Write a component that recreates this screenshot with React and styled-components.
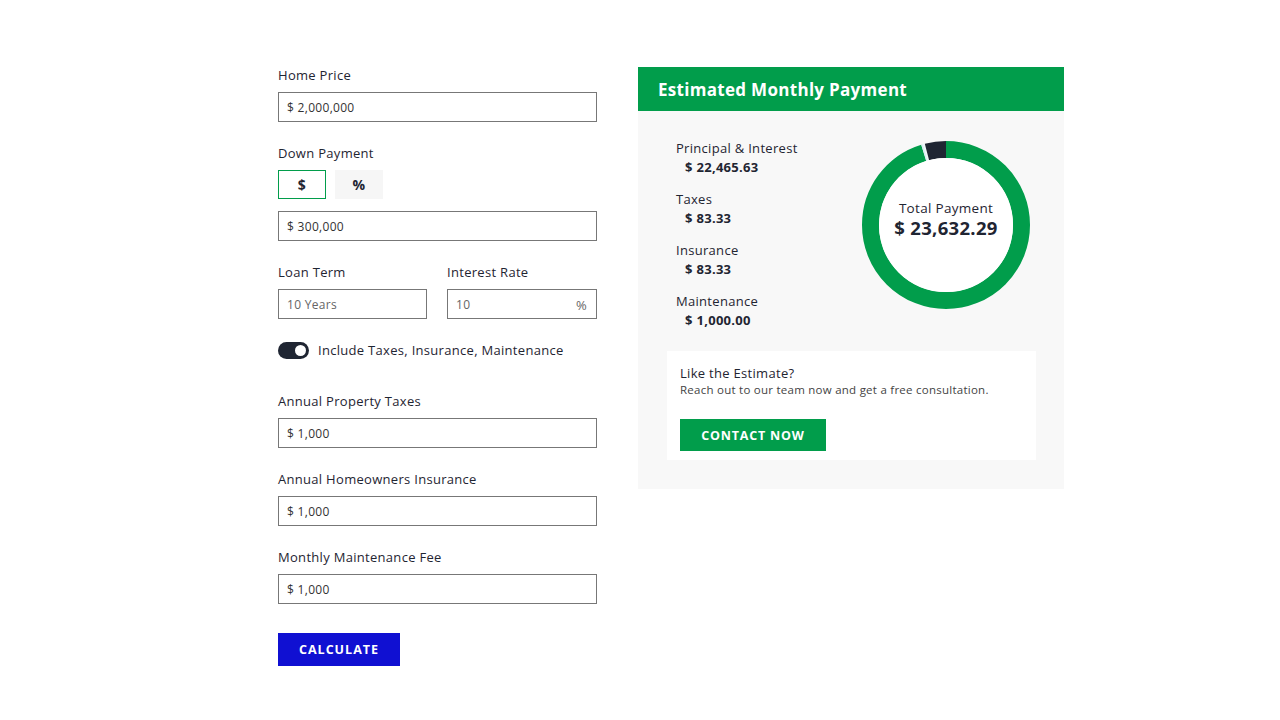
import React from 'react'
import styled, { createGlobalStyle } from 'styled-components'

const GREEN = '#019d4b'
const DARK = '#1f2532'

const GlobalStyle = createGlobalStyle`
  body {
    margin: 0;
    background: #fff;
    font-family: 'Open Sans', 'Liberation Sans', sans-serif;
    color: #1f2532;
    letter-spacing: 0.3px;
  }
`

const fields = [
  { label: 'Annual Property Taxes', value: '$ 1,000' },
  { label: 'Annual Homeowners Insurance', value: '$ 1,000' },
  { label: 'Monthly Maintenance Fee', value: '$ 1,000' }
]

const breakdown = [
  { label: 'Principal & Interest', value: '$ 22,465.63' },
  { label: 'Taxes', value: '$ 83.33' },
  { label: 'Insurance', value: '$ 83.33' },
  { label: 'Maintenance', value: '$ 1,000.00' }
]

const slices = [
  { value: 22465.63, color: GREEN },
  { value: 83.33, color: '#d8eef4' },
  { value: 83.33, color: '#eef6f8' },
  { value: 1000, color: DARK }
]

const Donut = () => {
  const r = 75.5
  const c = 2 * Math.PI * r
  const total = slices.reduce((s, x) => s + x.value, 0)
  let offset = 0
  return (
    <svg width="170" height="170" viewBox="0 0 170 170">
      <g transform="rotate(-90 85 85)">
        {slices.map((s, i) => {
          const len = (s.value / total) * c
          const el = (
            <circle
              key={i}
              cx="85"
              cy="85"
              r={r}
              fill="none"
              stroke={s.color}
              strokeWidth="17"
              strokeDasharray={`${len} ${c - len}`}
              strokeDashoffset={-offset}
            />
          )
          offset += len
          return el
        })}
      </g>
      <circle cx="85" cy="85" r="67" fill="#fff" />
    </svg>
  )
}

const App = () => {
  return (
    <>
      <GlobalStyle />
      <Page>
        <Form>
          <Field>
            <Label>Home Price</Label>
            <Input>$ 2,000,000</Input>
          </Field>
          <Field>
            <Label>Down Payment</Label>
            <ModeRow>
              <ModeButton active>$</ModeButton>
              <ModeButton>%</ModeButton>
            </ModeRow>
            <Input>$ 300,000</Input>
          </Field>
          <TwoCol>
            <Field>
              <Label>Loan Term</Label>
              <Input muted>10 Years</Input>
            </Field>
            <Field>
              <Label>Interest Rate</Label>
              <Input muted>
                <span>10</span>
                <Suffix>%</Suffix>
              </Input>
            </Field>
          </TwoCol>
          <SwitchRow>
            <Switch>
              <Knob />
            </Switch>
            <SwitchLabel>Include Taxes, Insurance, Maintenance</SwitchLabel>
          </SwitchRow>
          {fields.map(f => (
            <Field key={f.label}>
              <Label>{f.label}</Label>
              <Input>{f.value}</Input>
            </Field>
          ))}
          <CalcButton>CALCULATE</CalcButton>
        </Form>

        <Panel>
          <PanelHeader>Estimated Monthly Payment</PanelHeader>
          <PanelBody>
            <Summary>
              <List>
                {breakdown.map(b => (
                  <Item key={b.label}>
                    <ItemLabel>{b.label}</ItemLabel>
                    <ItemValue>{b.value}</ItemValue>
                  </Item>
                ))}
              </List>
              <Chart>
                <Donut />
                <ChartCenter>
                  <TotalLabel>Total Payment</TotalLabel>
                  <TotalValue>$ 23,632.29</TotalValue>
                </ChartCenter>
              </Chart>
            </Summary>
            <Cta>
              <CtaTitle>Like the Estimate?</CtaTitle>
              <CtaText>Reach out to our team now and get a free consultation.</CtaText>
              <ContactButton>CONTACT NOW</ContactButton>
            </Cta>
          </PanelBody>
        </Panel>
      </Page>
    </>
  )
}

const Page = styled.div`
  display: flex;
  align-items: flex-start;
  gap: 41px;
  padding: 67px 0 0 278px;
`

const Form = styled.div`
  width: 319px;
  display: flex;
  flex-direction: column;
  gap: 23px;
`

const Field = styled.div`
  display: flex;
  flex-direction: column;
`

const Label = styled.div`
  font-size: 13px;
  line-height: 17px;
  margin-bottom: 8px;
  color: #1f2532;
`

const Input = styled.div`
  height: 30px;
  box-sizing: border-box;
  border: 1.5px solid #777;
  display: flex;
  align-items: center;
  justify-content: space-between;
  padding: 0 9px 0 8px;
  font-size: 12px;
  color: ${p => (p.muted ? '#666' : '#333')};
`

const Suffix = styled.span`
  font-size: 13px;
  padding-top: 2px;
`

const TwoCol = styled.div`
  display: grid;
  grid-template-columns: 149px 150px;
  gap: 20px;
`

const ModeRow = styled.div`
  display: flex;
  gap: 9px;
  margin-bottom: 12px;
`

const ModeButton = styled.div`
  width: 48px;
  height: 29px;
  box-sizing: border-box;
  display: flex;
  align-items: center;
  justify-content: center;
  font-size: 14px;
  font-weight: 700;
  background: ${p => (p.active ? '#fff' : '#f6f6f6')};
  border: 1.5px solid ${p => (p.active ? GREEN : 'transparent')};
`

const SwitchRow = styled.div`
  display: flex;
  align-items: center;
  gap: 9px;
  height: 17px;
  margin-bottom: 11px;
`

const Switch = styled.div`
  width: 31px;
  height: 17px;
  border-radius: 9px;
  background: ${DARK};
  position: relative;
`

const Knob = styled.div`
  position: absolute;
  right: 3px;
  top: 3px;
  width: 11px;
  height: 11px;
  border-radius: 50%;
  background: #fff;
`

const SwitchLabel = styled.span`
  font-size: 13px;
  line-height: 17px;
`

const CalcButton = styled.button`
  width: 122px;
  height: 33px;
  border: none;
  background: #1010d2;
  color: #fff;
  font-family: inherit;
  font-size: 12.5px;
  font-weight: 700;
  letter-spacing: 1px;
  margin-top: 6px;
  padding: 0;
`

const Panel = styled.div`
  width: 426px;
  background: #f8f8f8;
`

const PanelHeader = styled.div`
  height: 44px;
  background: ${GREEN};
  color: #fff;
  font-size: 17px;
  font-weight: 700;
  display: flex;
  align-items: center;
  padding-left: 20px;
`

const PanelBody = styled.div`
  padding: 28px 28px 29px 29px;
`

const Summary = styled.div`
  display: flex;
  justify-content: space-between;
  align-items: flex-start;
`

const List = styled.div`
  display: flex;
  flex-direction: column;
  gap: 14px;
  padding-left: 9px;
`

const Item = styled.div`
  display: flex;
  flex-direction: column;
  gap: 1px;
`

const ItemLabel = styled.div`
  font-size: 13px;
  line-height: 18px;
`

const ItemValue = styled.div`
  font-size: 13px;
  line-height: 18px;
  font-weight: 700;
  padding-left: 9px;
`

const Chart = styled.div`
  position: relative;
  width: 170px;
  height: 170px;
  margin: 1px 5px 0 0;
`

const ChartCenter = styled.div`
  position: absolute;
  inset: 0;
  display: flex;
  flex-direction: column;
  align-items: center;
  justify-content: center;
  padding-bottom: 12px;
`

const TotalLabel = styled.div`
  font-size: 13.5px;
  line-height: 17px;
`

const TotalValue = styled.div`
  font-size: 18.5px;
  line-height: 22px;
  font-weight: 700;
`

const Cta = styled.div`
  margin-top: 22px;
  background: #fff;
  padding: 14px 13px 9px;
`

const CtaTitle = styled.div`
  font-size: 13px;
  line-height: 17px;
`

const CtaText = styled.div`
  font-size: 11.5px;
  line-height: 15px;
  letter-spacing: 0.25px;
  color: #444;
`

const ContactButton = styled.button`
  margin-top: 22px;
  width: 146px;
  height: 32px;
  border: none;
  background: ${GREEN};
  color: #fff;
  font-family: inherit;
  font-size: 12.5px;
  font-weight: 700;
  letter-spacing: 0.8px;
  padding: 0;
`

export default App
